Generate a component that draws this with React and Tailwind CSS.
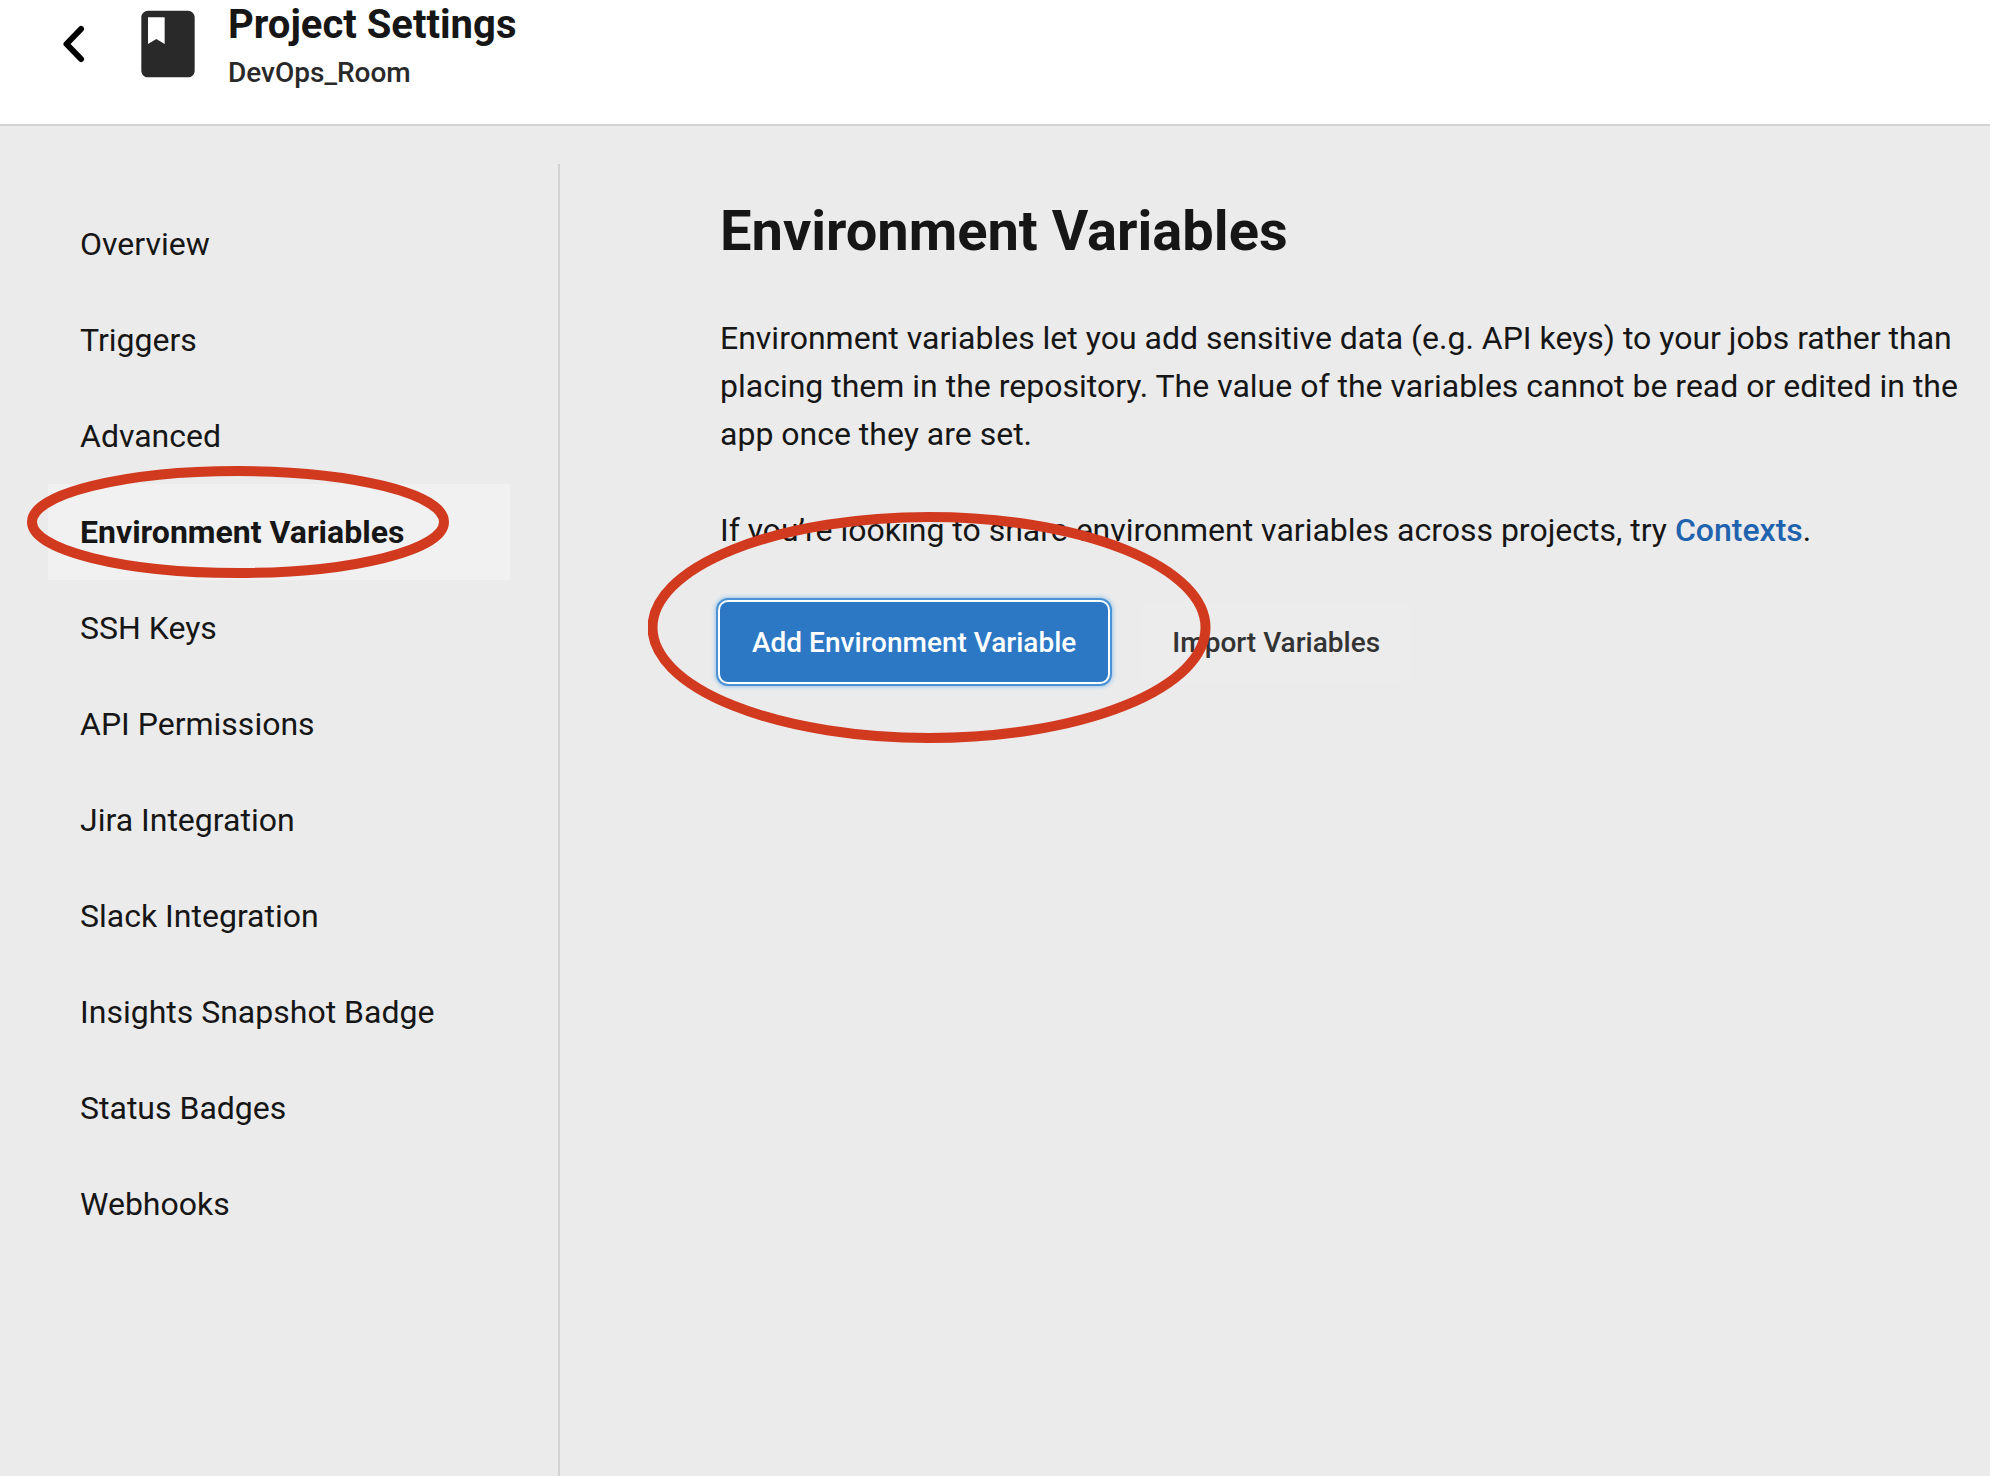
const navItems = [
  'Overview',
  'Triggers',
  'Advanced',
  'Environment Variables',
  'SSH Keys',
  'API Permissions',
  'Jira Integration',
  'Slack Integration',
  'Insights Snapshot Badge',
  'Status Badges',
  'Webhooks',
];

function BackIcon() {
  return (
    <svg viewBox="0 0 24 40" className="h-10 w-6" fill="none" stroke="#000" strokeWidth="6" strokeLinecap="round" strokeLinejoin="round" aria-hidden="true">
      <path d="M19 5 4.500 20 19 35" />
    </svg>
  );
}

function BookIcon() {
  return (
    <svg viewBox="0 0 24 24" className="size-20 shrink-0" fill="#292929" aria-hidden="true">
      <path d="M18 2H6c-1.100 0-2 .9-2 2v16c0 1.100.9 2 2 2h12c1.100 0 2-.9 2-2V4c0-1.100-.9-2-2-2zM6 4h5v8l-2.500-1.500L6 12V4z" />
    </svg>
  );
}

function Header() {
  return (
    <header className="flex h-[126px] items-start border-b-2 border-[#d3d3d3] bg-white pl-[62px]">
      <button type="button" aria-label="Back" className="mt-6">
        <BackIcon />
      </button>
      <div className="ml-[42px] mt-1">
        <BookIcon />
      </div>
      <div className="ml-5 text-[#161616]">
        <h1 className="text-[40px] font-bold leading-[50px]">Project Settings</h1>
        <p className="text-[28px] font-medium leading-[46px] text-[#292929]">DevOps_Room</p>
      </div>
    </header>
  );
}

function NavItem({ label, active }) {
  return (
    <li className="relative">
      <a
        href="#"
        aria-current={active ? 'page' : undefined}
        className={
          active
            ? 'flex h-24 items-center bg-[#f1f1f1] px-8 font-bold'
            : 'flex h-24 items-center px-8'
        }
      >
        {label}
      </a>
      {active && (
        <svg className="pointer-events-none absolute -left-[21px] -top-[18px] z-10 h-28 w-[423px]" viewBox="0 0 423 112" fill="none" aria-hidden="true">
          <ellipse cx="211" cy="56" rx="206" ry="51" stroke="#d23a20" strokeWidth="10" />
        </svg>
      )}
    </li>
  );
}

function Sidebar() {
  return (
    <nav aria-label="Project settings" className="mt-[38px] w-[560px] shrink-0 border-r-2 border-[#d3d3d3] px-12 pt-8 text-[32px]">
      <ul>
        {navItems.map((label) => (
          <NavItem key={label} label={label} active={label === 'Environment Variables'} />
        ))}
      </ul>
    </nav>
  );
}

function Content() {
  return (
    <main className="flex min-w-0 flex-1 flex-col items-start gap-12 pl-40 pr-6 pt-[70px] text-[32px] leading-12">
      <h2 className="text-[56px] font-bold leading-[70px]">Environment Variables</h2>
      <p>
        Environment variables let you add sensitive data (e.g. API keys) to your jobs rather than placing them in
        the repository. The value of the variables cannot be read or edited in the app once they are set.
      </p>
      <p>
        If you’re looking to share environment variables across projects, try{' '}
        <a href="#" className="font-medium text-[#1f62ad]">Contexts</a>.
      </p>
      <div className="relative flex gap-8 text-[28px] font-medium">
        <button
          type="button"
          className="h-20 rounded-lg bg-[#2c78c5] px-8 pt-0.5 text-white shadow-[0_0_0_2px_#ffffff,0_0_0_4px_#4a92d4,0_0_4px_5px_#9cc6ea]"
        >
          Add Environment Variable
        </button>
        <button type="button" className="h-20 rounded-lg bg-[#ececec] px-8 pt-0.5 text-[#333333]">
          Import Variables
        </button>
        <svg className="pointer-events-none absolute -left-[72px] -top-[90px] z-10 h-[231px] w-[564px]" viewBox="0 0 564 231" fill="none" aria-hidden="true">
          <ellipse cx="281" cy="115.500" rx="276.500" ry="110.500" stroke="#d23a20" strokeWidth="10" />
        </svg>
      </div>
    </main>
  );
}

export default function App() {
  return (
    <div className="flex min-h-screen flex-col overflow-x-hidden bg-[#ebebeb] font-[Roboto,sans-serif] text-[#161616]">
      <Header />
      <div className="flex flex-1">
        <Sidebar />
        <Content />
      </div>
    </div>
  );
}
